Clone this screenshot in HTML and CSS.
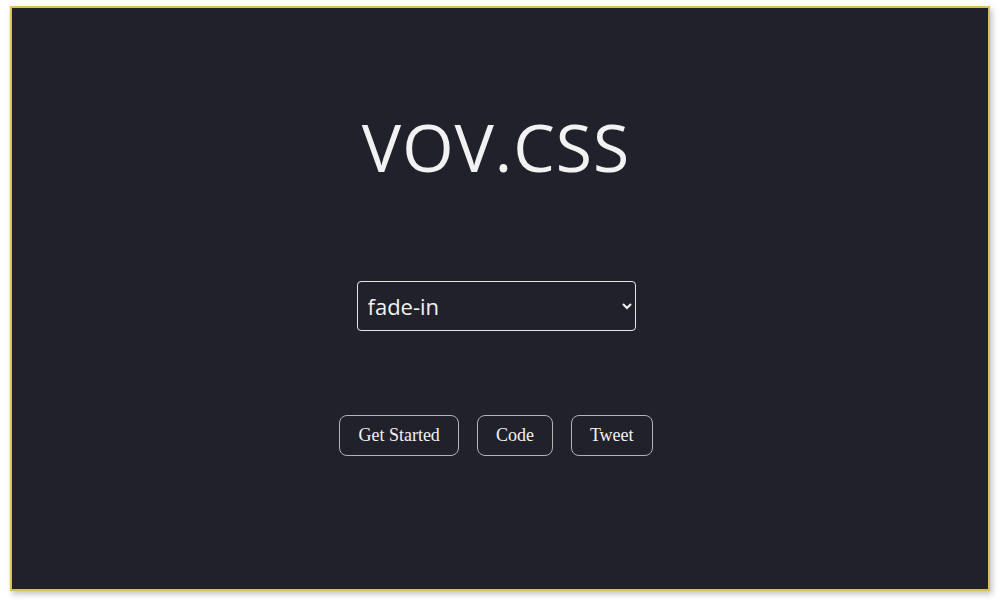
FILE: index.html
```html
<!DOCTYPE html>
<html lang="en">
<head>
    <meta charset="UTF-8">
    <title>vov.css</title>
    <link rel="stylesheet" href="styles.css">
</head>
<body>

    <div class="frame">
        <main class="hero">
            <h1 class="title">VOV.CSS</h1>

            <div class="picker">
                <select class="effect">
                    <option>fade-in</option>
                    <option>fade-out</option>
                    <option>shake</option>
                </select>
            </div>

            <div class="actions">
                <button class="btn">Get Started</button>
                <button class="btn">Code</button>
                <button class="btn">Tweet</button>
            </div>
        </main>
    </div>

</body>
</html>
```

FILE: styles.css
```css
html, body {
    margin: 0;
    height: 100%;
    background: #fff;
}

.frame {
    box-sizing: border-box;
    margin: 6px 10px 0 10px;
    height: 585px;
    background: #21212b;
    border: 2px solid #d8c158;
    box-shadow: 2px 3px 6px rgba(0, 0, 0, 0.25);
}

.hero {
    display: flex;
    flex-direction: column;
    align-items: center;
    padding-right: 8px;
}

.title {
    margin: 93px 0 0 0;
    font-family: 'Open Sans', sans-serif;
    font-weight: 500;
    font-size: 66px;
    letter-spacing: 1px;
    color: #f2f2f2;
}

.picker {
    margin-top: 90px;
}

.effect {
    width: 279px;
    height: 50px;
    padding: 0 6px;
    font-family: 'Open Sans', sans-serif;
    font-size: 22px;
    color: #f2f2f2;
    background: #21212b;
    border: 1px solid #e6e6e6;
    border-radius: 4px;
    outline: none;
}

.actions {
    display: flex;
    gap: 18px;
    margin-top: 84px;
}

.btn {
    height: 41px;
    padding: 0 18px;
    font-family: 'Liberation Serif', serif;
    font-size: 18px;
    color: #f2f2f2;
    background: #21212b;
    border: 1px solid #b4b4b4;
    border-radius: 8px;
    cursor: pointer;
}
```
